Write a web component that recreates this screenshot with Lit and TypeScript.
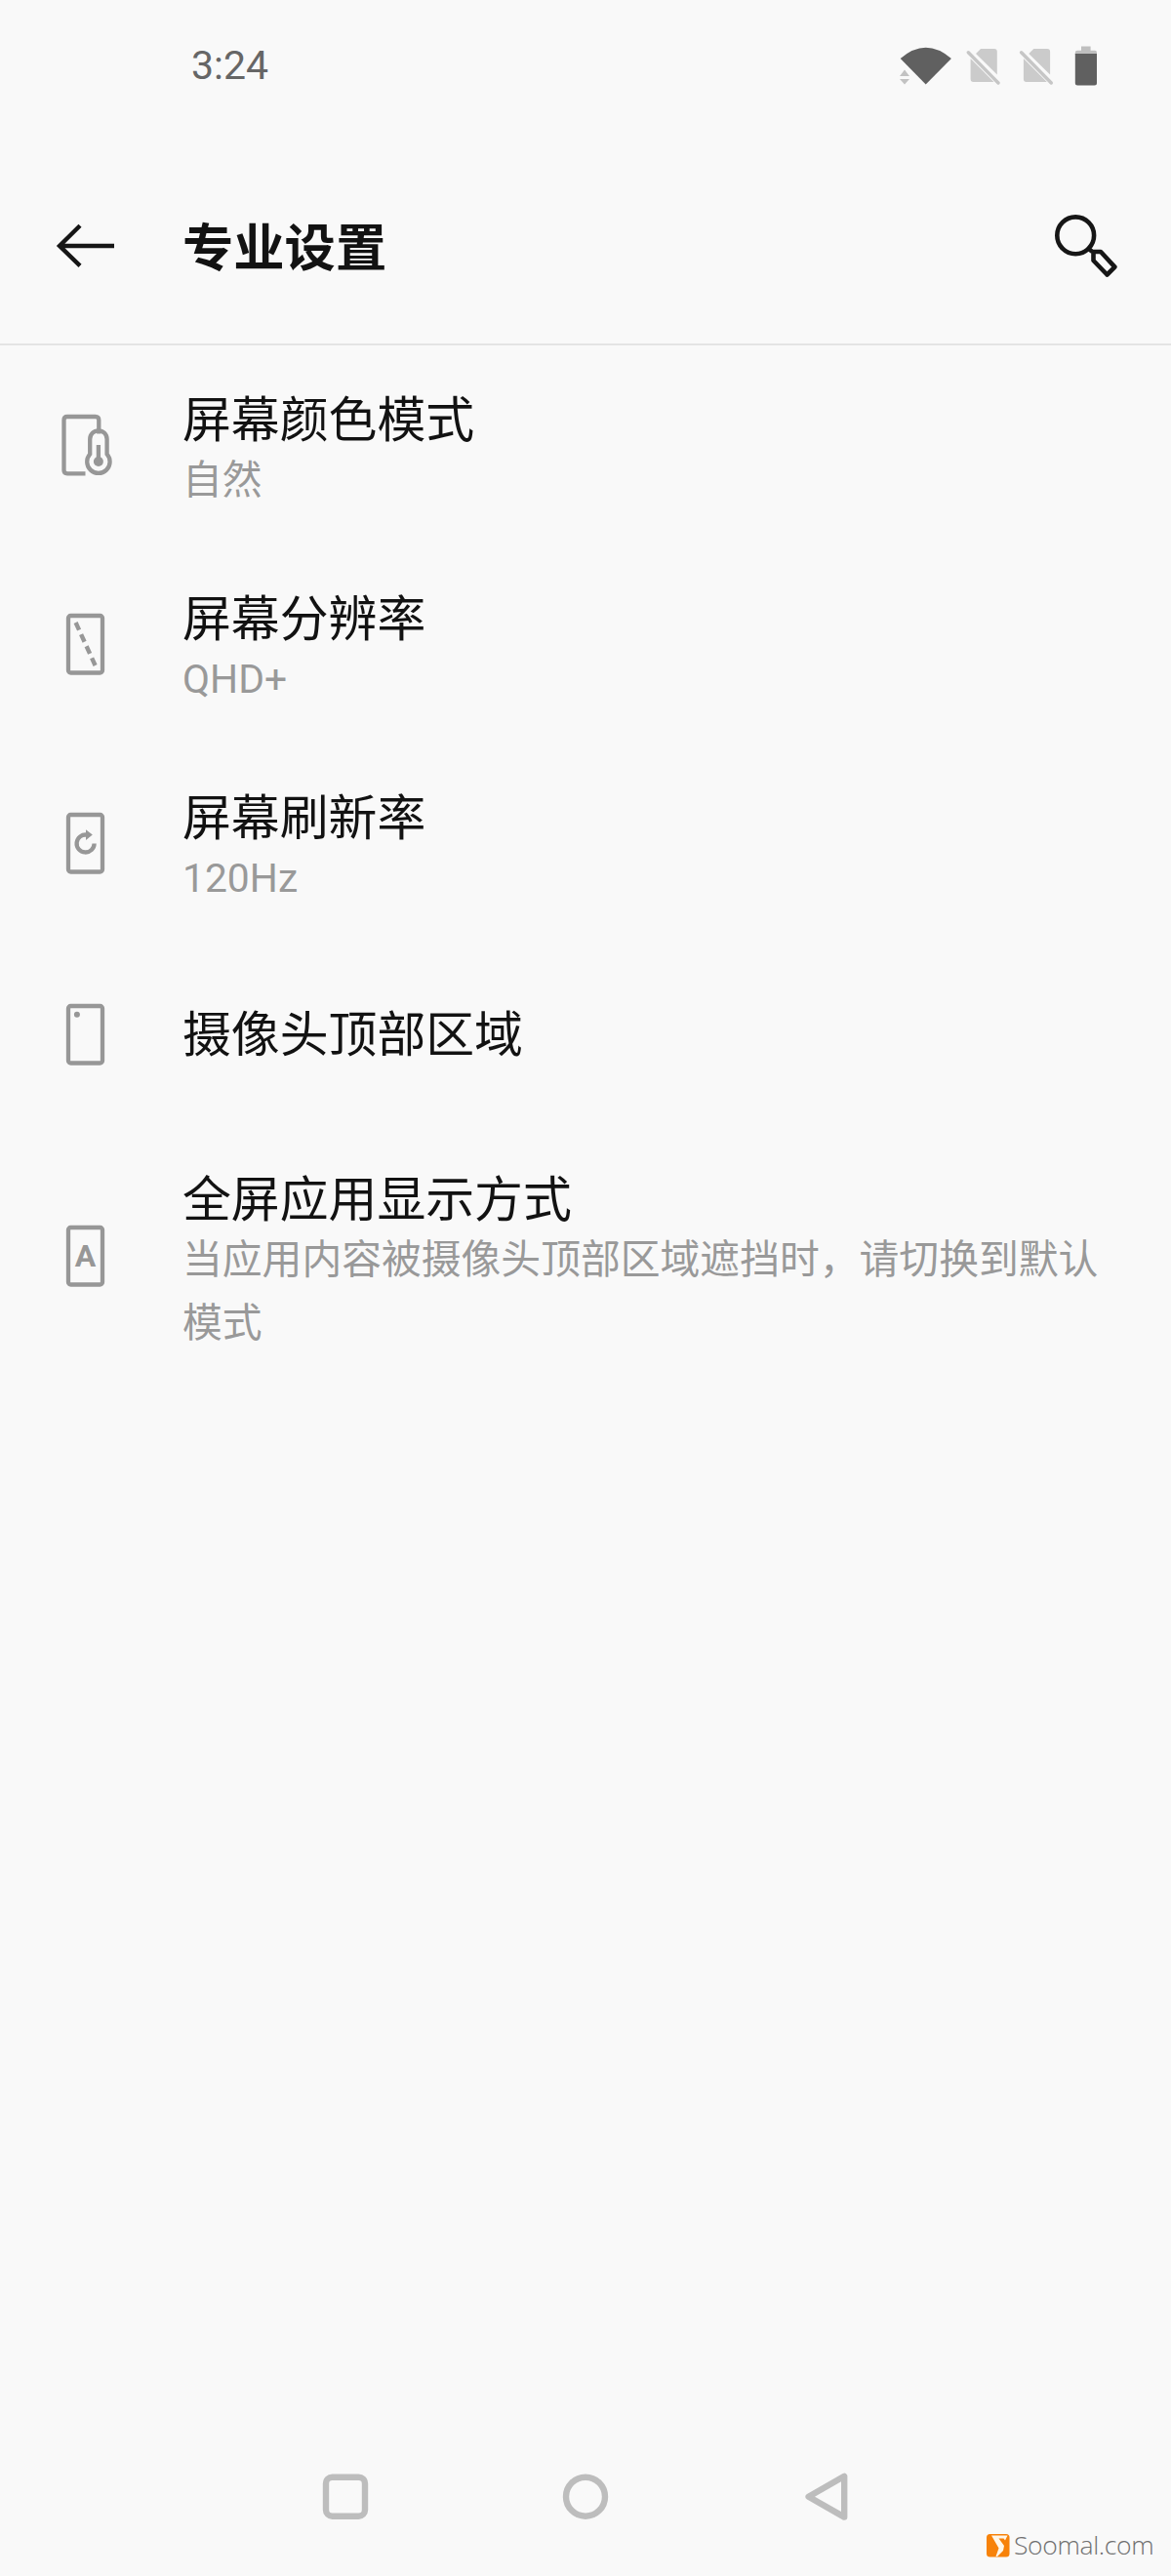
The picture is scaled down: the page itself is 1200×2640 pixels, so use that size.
import { LitElement, html, css, svg, nothing } from "lit";
import { customElement } from "lit/decorators.js";

const phone = svg`<rect x="16" y="5" width="35" height="58.5" rx="2.5" />`;

const rows = [
  {
    kind: "double",
    title: "屏幕颜色模式",
    note: "自然",
    icon: svg`
      <path d="M47.3 22.5V8.5Q47.3 5 43.8 5H15Q11.5 5 11.5 8.5V60Q11.5 63.3 15 63.3H33.5" />
      <path d="M38.2 28a8.7 8.7 0 0 1 17.4 0V43.4A11.7 11.7 0 1 1 38.2 43.4Z" />
      <path d="M46.9 34V50" />
      <circle class="solid" cx="46.9" cy="51" r="5" />`,
  },
  {
    kind: "double",
    title: "屏幕分辨率",
    note: "QHD+",
    icon: svg`${phone}<path d="M23.6 12L43.6 56" stroke-dasharray="8.4 4.9" stroke-width="4.4" />`,
  },
  {
    kind: "double",
    title: "屏幕刷新率",
    note: "120Hz",
    icon: svg`${phone}
      <path d="M42.6 34.5A9 9 0 1 1 35 25.6" />
      <path class="solid" d="M34 20.2L40.8 25.4L34 31Z" />`,
  },
  {
    kind: "single",
    title: "摄像头顶部区域",
    note: "",
    icon: svg`${phone}<circle class="solid" cx="24.9" cy="13.8" r="3" />`,
  },
  {
    kind: "triple",
    title: "全屏应用显示方式",
    note: "当应用内容被摄像头顶部区域遮挡时，请切换到默认模式",
    icon: svg`${phone}<text class="letter" x="33.6" y="45" text-anchor="middle">A</text>`,
  },
];

@customElement("app-root")
export class AppRoot extends LitElement {
  static styles = css`
    :host {
      display: block;
      font-family: Roboto, "Noto Sans CJK SC", sans-serif;
    }
    .screen {
      display: flex;
      flex-direction: column;
      box-sizing: border-box;
      width: 1200px;
      height: 2640px;
      background: #f9f9f9;
      color: #121212;
      overflow: hidden;
    }
    svg {
      display: block;
      flex: none;
    }
    .status {
      display: flex;
      justify-content: space-between;
      box-sizing: border-box;
      height: 150px;
      padding: 40px 70px 0 196px;
    }
    .clock {
      font-size: 41px;
      line-height: 54px;
      color: #666;
    }
    .header {
      display: flex;
      align-items: center;
      box-sizing: border-box;
      height: 204px;
      padding: 2px 50px 0 54px;
      border-bottom: 2px solid #e4e4e4;
    }
    .title {
      flex: 1;
      margin: 0 0 0 65px;
      padding-top: 6px;
      font-size: 52.3px;
      line-height: 76px;
      font-weight: 700;
    }
    .row {
      display: flex;
      align-items: center;
      gap: 65px;
      box-sizing: border-box;
      padding: 0 60px 0 54px;
    }
    .double {
      height: 204px;
    }
    .single {
      height: 188px;
    }
    .triple {
      height: 266px;
    }
    .glyph {
      fill: none;
      stroke: #979797;
      stroke-width: 4.3;
    }
    .solid {
      fill: #979797;
      stroke: none;
    }
    .letter {
      fill: #979797;
      stroke: none;
      font-size: 32px;
      font-weight: 700;
    }
    .text {
      flex: 1;
      padding-top: 3px;
    }
    .noted {
      padding-top: 14px;
    }
    .name {
      font-size: 49.85px;
      line-height: 61px;
    }
    .note {
      margin-top: -2px;
      font-size: 40.8px;
      line-height: 65px;
      color: #999;
    }
    .spacer {
      flex: 1;
    }
    .nav {
      display: flex;
      justify-content: center;
      gap: 186px;
    }
    .key {
      fill: none;
      stroke: #bdbdbd;
      stroke-width: 6.4;
      stroke-linejoin: round;
    }
    .credit {
      display: flex;
      justify-content: flex-end;
      align-items: center;
      gap: 4px;
      box-sizing: border-box;
      height: 51px;
      padding: 0 21px 12px 0;
    }
    .site {
      width: 140px;
      padding-bottom: 2px;
      font-family: "Open Sans", "Noto Sans", sans-serif;
      font-weight: 300;
      font-size: 26.5px;
      line-height: 38px;
      letter-spacing: -0.35px;
      white-space: nowrap;
      color: #707070;
    }
  `;

  render() {
    return html`
      <div class="screen">
        <div class="status">
          <div class="clock">3:24</div>
          <svg width="210" height="54" viewBox="920 40 210 54">
            <path d="M922.7 60Q948.7 37.5 974.9 60L948.7 86.6Z" fill="#606060" />
            <path d="M922 78L927 71.5L932 78ZM922 81L927 86.5L932 81Z" fill="#c2c2c2" />
            ${[0, 54.3].map(
              (dx) => svg`<g transform="translate(${dx} 0)">
                <path d="M1000 55L1005 50H1019Q1021.8 50 1021.8 53V76.5ZM994.6 60L1018.5 84H997.5Q994.6 84 994.6 81Z" fill="#cbcbcb" />
                <path d="M992.3 53.7L1023 85" stroke="#c6c6c6" stroke-width="3.4" stroke-linecap="round" />
              </g>`
            )}
            <path d="M1108 47.5H1117.6V51.8H1122Q1124 51.8 1124 54V56H1101.8V54Q1101.8 51.8 1104 51.8H1108Z" fill="#bfbfbf" />
            <path d="M1101.8 55H1124V85Q1124 87.5 1121.5 87.5H1104.3Q1101.8 87.5 1101.8 85Z" fill="#606060" />
          </svg>
        </div>
        <div class="header">
          <svg width="68" height="68" viewBox="54 218 68 68" fill="none" stroke="#161616" stroke-width="4.4">
            <path d="M60.5 252H117M82 231.3L61 252L82 272.3" />
          </svg>
          <h1 class="title">专业设置</h1>
          <svg width="80" height="80" viewBox="1070 212 80 80" fill="none" stroke="#161616" stroke-width="4.6">
            <circle cx="1102.2" cy="241.3" r="18.9" />
            <path d="M1115.5 255L1119.5 258H1128L1142.4 273.6L1134.5 281.5L1120.5 267V258.5" stroke-linejoin="round" />
          </svg>
        </div>
        ${rows.map(
          (r) => html`<div class="row ${r.kind}">
            <svg class="glyph" width="68" height="68" viewBox="0 0 68 68">${r.icon}</svg>
            <div class="text ${r.note ? "noted" : ""}">
              <div class="name">${r.title}</div>
              ${r.note ? html`<div class="note">${r.note}</div>` : nothing}
            </div>
          </div>`
        )}
        <div class="spacer"></div>
        <div class="nav">
          <svg class="key" width="60" height="60" viewBox="0 0 60 60"><rect x="10" y="9.7" width="40" height="40" rx="6.5" /></svg>
          <svg class="key" width="60" height="60" viewBox="0 0 60 60"><circle cx="30" cy="29.7" r="20" /></svg>
          <svg class="key" width="60" height="60" viewBox="0 0 60 60"><path d="M12.6 29.7L49.2 8.8V50.6Z" /></svg>
        </div>
        <div class="credit">
          <svg width="24" height="24" viewBox="0 0 24 24">
            <rect width="23.5" height="23.5" rx="3.5" fill="#f7820a" />
            <path d="M5 1.5H21.5L19 6.5L17.5 4.5H12.5L18 12L17 17L11 23H9.5L12.5 14.5Z" fill="#fff6e8" />
          </svg>
          <span class="site">Soomal.com</span>
        </div>
      </div>
    `;
  }
}
